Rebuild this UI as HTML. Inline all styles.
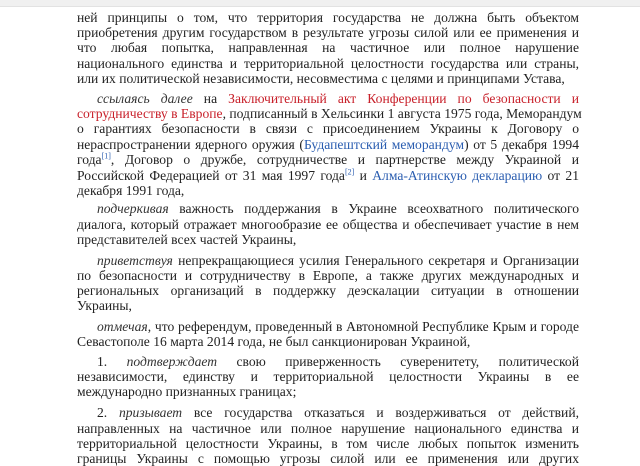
<!DOCTYPE html>
<html><head><meta charset="utf-8"><style>
html,body{margin:0;padding:0;background:#fff;width:640px;height:463px;overflow:hidden}
.bar{position:absolute;left:0;top:0;width:640px;height:6px;background:#f0f0f0;border-bottom:1px solid #e2e2e2}
.l{position:absolute;left:77px;width:502px;font-family:"Liberation Serif",serif;font-size:13.6px;color:#222;white-space:nowrap;line-height:15px}
.j{text-align:justify;text-align-last:justify}
.i{font-style:italic;color:#333}
.r{color:#c8202a}.b{color:#2a5db0}
sup{font-size:8px;line-height:0;color:#2a5db0}
</style></head><body>
<div class="bar"></div>
<div class="l j" style="top:10px">ней принципы о том, что территория государства не должна быть объектом</div>
<div class="l j" style="top:25px">приобретения другим государством в результате угрозы силой или ее применения и</div>
<div class="l j" style="top:40px">что любая попытка, направленная на частичное или полное нарушение</div>
<div class="l j" style="top:56px">национального единства и территориальной целостности государства или страны,</div>
<div class="l" style="top:71px">или их политической независимости, несовместима с целями и принципами Устава,</div>

<div class="l j" style="top:91px;left:97px;width:482px"><span class="i">ссылаясь далее</span> на <span class="r">Заключительный акт Конференции по безопасности и</span></div>
<div class="l j" style="top:106px"><span class="r">сотрудничеству в Европе</span>, подписанный в Хельсинки 1 августа 1975 года, Меморандум</div>
<div class="l j" style="top:121px">о гарантиях безопасности в связи с присоединением Украины к Договору о</div>
<div class="l j" style="top:137px">нераспространении ядерного оружия (<span class="b">Будапештский меморандум</span>) от 5 декабря 1994</div>
<div class="l j" style="top:152px">года<sup>[1]</sup>, Договор о дружбе, сотрудничестве и партнерстве между Украиной и</div>
<div class="l j" style="top:168px">Российской Федерацией от 31 мая 1997 года<sup>[2]</sup> и <span class="b">Алма-Атинскую декларацию</span> от 21</div>
<div class="l" style="top:183px">декабря 1991 года,</div>

<div class="l j" style="top:201px;left:97px;width:482px"><span class="i">подчеркивая</span> важность поддержания в Украине всеохватного политического</div>
<div class="l j" style="top:217px">диалога, который отражает многообразие ее общества и обеспечивает участие в нем</div>
<div class="l" style="top:232px">представителей всех частей Украины,</div>

<div class="l j" style="top:253px;left:97px;width:482px"><span class="i">приветствуя</span> непрекращающиеся усилия Генерального секретаря и Организации</div>
<div class="l j" style="top:268px">по безопасности и сотрудничеству в Европе, а также других международных и</div>
<div class="l j" style="top:283px">региональных организаций в поддержку деэскалации ситуации в отношении</div>
<div class="l" style="top:298px">Украины,</div>

<div class="l j" style="top:319px;left:97px;width:482px"><span class="i">отмечая</span>, что референдум, проведенный в Автономной Республике Крым и городе</div>
<div class="l" style="top:334px">Севастополе 16 марта 2014 года, не был санкционирован Украиной,</div>

<div class="l j" style="top:354px;left:97px;width:482px">1. <span class="i">подтверждает</span> свою приверженность суверенитету, политической</div>
<div class="l j" style="top:369px">независимости, единству и территориальной целостности Украины в ее</div>
<div class="l" style="top:384px">международно признанных границах;</div>

<div class="l j" style="top:405px;left:97px;width:482px">2. <span class="i">призывает</span> все государства отказаться и воздерживаться от действий,</div>
<div class="l j" style="top:421px">направленных на частичное или полное нарушение национального единства и</div>
<div class="l j" style="top:436px">территориальной целостности Украины, в том числе любых попыток изменить</div>
<div class="l j" style="top:451px">границы Украины с помощью угрозы силой или ее применения или других</div>
</body></html>
